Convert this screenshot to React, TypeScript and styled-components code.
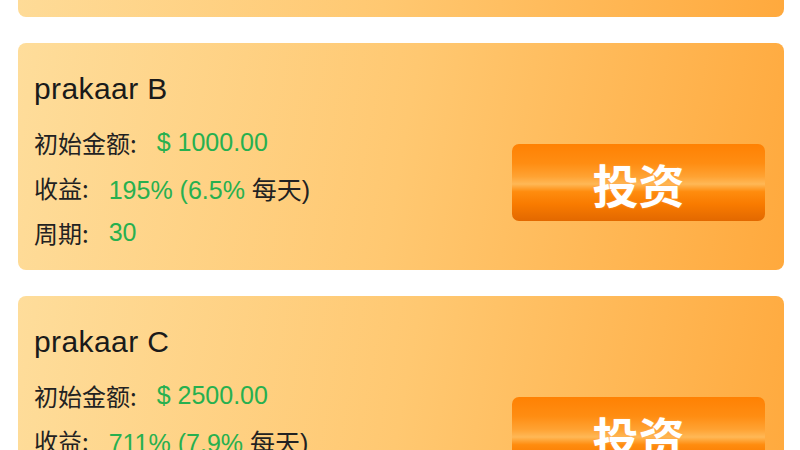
import React from "react";
import styled, {createGlobalStyle} from "styled-components";

const GlobalStyle = createGlobalStyle`
	html, body {
		margin: 0;
		padding: 0;
		background: #ffffff;
		overflow: hidden;
	}
	body {
		font-family: "Liberation Sans", Arial, "Noto Sans CJK SC", sans-serif;
		color: #1f1f1f;
	}
`;

interface IPlan {
	name: string;
	amount: string;
	rate: string;
	daily: string;
	period: string;
}

const plans: IPlan[] = [
	{name: "prakaar A", amount: "$ 500.00", rate: "120%", daily: "6.0%", period: "20"},
	{name: "prakaar B", amount: "$ 1000.00", rate: "195%", daily: "6.5%", period: "30"},
	{name: "prakaar C", amount: "$ 2500.00", rate: "711%", daily: "7.9%", period: "90"},
];

// the page is scrolled: the first card sits mostly above the window
const PlanList = styled.div`
	display: flex;
	flex-direction: column;
	gap: 26px;
	margin-top: -210px;
	padding: 0 16px 0 18px;
`;

const Card = styled.div`
	border-radius: 8px;
	padding: 28px 19px 15px 16px;
	background: linear-gradient(100deg, #fedd9b 0%, #ffc871 50%, #ffa93d 100%);
`;

const Title = styled.h3`
	margin: 0 0 13px;
	font-size: 30px;
	font-weight: 400;
	letter-spacing: 0.4px;
	line-height: 36px;
	color: #1a1a1a;
`;

const Body = styled.div`
	display: flex;
	align-items: center;
	justify-content: space-between;
`;

const Info = styled.div`
	display: flex;
	flex-direction: column;
`;

const Row = styled.div`
	display: flex;
	align-items: center;
	gap: 20px;
	height: 45px;
	font-size: 25px;
`;

const Label = styled.span`
	color: #222;
	font-family: "Noto Sans CJK SC", sans-serif;
	font-size: 24px;
`;

const Value = styled.span`
	color: #27b04f;
`;

const Plain = styled.span`
	color: #222;
	font-family: "Liberation Sans", "Noto Sans CJK SC", sans-serif;
`;

const InvestButton = styled.button`
	width: 253px;
	height: 77px;
	margin-bottom: 10px;
	border: none;
	border-radius: 7px;
	cursor: pointer;
	color: #ffffff;
	font-family: "Noto Sans CJK SC", sans-serif;
	font-size: 46px;
	font-weight: 700;
	text-shadow: 0 0 2px rgba(255, 170, 80, 0.9);
	background: linear-gradient(
		to bottom,
		#ff8103 0%,
		#ff8d12 25%,
		#ffa232 42%,
		#ffb856 52%,
		#ff8c0e 62%,
		#f97b00 78%,
		#e26800 100%
	);
`;

const PlanCard = ({plan}: {plan: IPlan}) => (
	<Card>
		<Title>{plan.name}</Title>
		<Body>
			<Info>
				<Row>
					<Label>初始金额:</Label>
					<Value>{plan.amount}</Value>
				</Row>
				<Row>
					<Label>收益:</Label>
					<span>
						<Value>
							{plan.rate} ({plan.daily}
						</Value>{" "}
						<Plain>每天)</Plain>
					</span>
				</Row>
				<Row>
					<Label>周期:</Label>
					<Value>{plan.period}</Value>
				</Row>
			</Info>
			<InvestButton>投资</InvestButton>
		</Body>
	</Card>
);

export default function App() {
	return (
		<>
			<GlobalStyle />
			<PlanList>
				{plans.map((plan) => (
					<PlanCard key={plan.name} plan={plan} />
				))}
			</PlanList>
		</>
	);
}
